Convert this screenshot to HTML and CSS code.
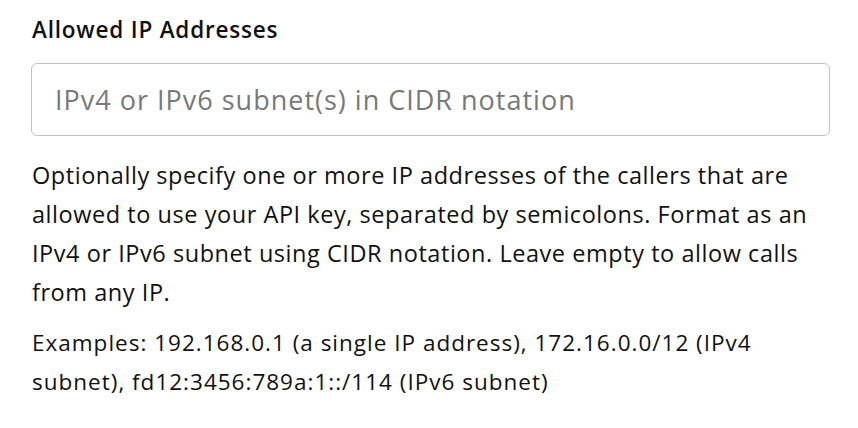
FILE: index.html
```html
<!DOCTYPE html>
<html>
<head>
<meta charset="utf-8">
<link rel="stylesheet" href="styles.css">
</head>
<body>
<div class="field">
  <label class="label" for="ips">Allowed IP Addresses</label>
  <input class="input" id="ips" type="text" placeholder="IPv4 or IPv6 subnet(s) in CIDR notation">
  <p class="help">Optionally specify one or more IP addresses of the callers that are allowed to use your API key, separated by semicolons. Format as an IPv4 or IPv6 subnet using CIDR notation. Leave empty to allow calls from any IP.</p>
  <p class="examples">Examples: 192.168.0.1 (a single IP address), 172.16.0.0/12 (IPv4 subnet), fd12:3456:789a:1::/114 (IPv6 subnet)</p>
</div>
</body>
</html>
```

FILE: styles.css
```css
html, body {
  margin: 0;
  padding: 0;
  background: #ffffff;
}
body {
  font-family: "Open Sans", "Noto Sans", sans-serif;
  color: #111111;
}
.field {
  display: flex;
  flex-direction: column;
  padding: 13px 28px 0 31px;
  width: 799px;
}
.label {
  font-size: 22.5px;
  font-weight: 600;
  letter-spacing: 0.8px;
  line-height: 34px;
  margin-left: 1px;
}
.input {
  margin-top: 16px;
  height: 73px;
  box-sizing: border-box;
  border: 1.5px solid #bfc2c6;
  border-radius: 6px;
  padding: 0 0 0 23px;
  font-family: "Open Sans", "Noto Sans", sans-serif;
  font-size: 27px;
  letter-spacing: 1px;
  color: #111;
  outline: none;
}
.input::placeholder {
  color: #787878;
}
.help {
  margin: 20px 0 0 1px;
  font-size: 23.5px;
  letter-spacing: 0.55px;
  line-height: 39px;
  width: 790px;
}
.examples {
  margin: 11px 0 0 1px;
  font-size: 22.5px;
  letter-spacing: 1px;
  line-height: 39px;
  width: 770px;
}
```
